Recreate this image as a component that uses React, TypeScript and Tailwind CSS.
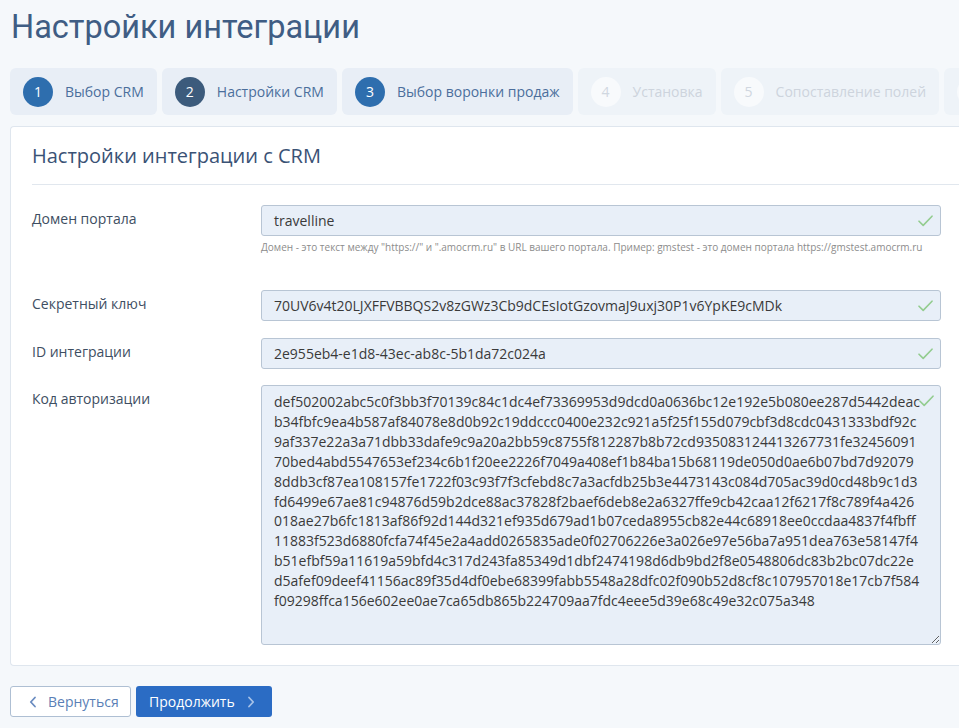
import React from "react";

const steps = [
  { n: 1, label: "Выбор CRM", state: "done" },
  { n: 2, label: "Настройки CRM", state: "current" },
  { n: 3, label: "Выбор воронки продаж", state: "done" },
  { n: 4, label: "Установка", state: "off" },
  { n: 5, label: "Сопоставление полей", state: "off" },
  { n: 6, label: "Завершение", state: "off" },
];

const codeLines = [
  "def502002abc5c0f3bb3f70139c84c1dc4ef73369953d9dcd0a0636bc12e192e5b080ee287d5442deac",
  "b34fbfc9ea4b587af84078e8d0b92c19ddccc0400e232c921a5f25f155d079cbf3d8cdc0431333bdf92c",
  "9af337e22a3a71dbb33dafe9c9a20a2bb59c8755f812287b8b72cd935083124413267731fe32456091",
  "70bed4abd5547653ef234c6b1f20ee2226f7049a408ef1b84ba15b68119de050d0ae6b07bd7d92079",
  "8ddb3cf87ea108157fe1722f03c93f7f3cfebd8c7a3acfdb25b3e4473143c084d705ac39d0cd48b9c1d3",
  "fd6499e67ae81c94876d59b2dce88ac37828f2baef6deb8e2a6327ffe9cb42caa12f6217f8c789f4a426",
  "018ae27b6fc1813af86f92d144d321ef935d679ad1b07ceda8955cb82e44c68918ee0ccdaa4837f4fbff",
  "11883f523d6880fcfa74f45e2a4add0265835ade0f02706226e3a026e97e56ba7a951dea763e58147f4",
  "b51efbf59a11619a59bfd4c317d243fa85349d1dbf2474198d6db9bd2f8e0548806dc83b2bc07dc22e",
  "d5afef09deef41156ac89f35d4df0ebe68399fabb5548a28dfc02f090b52d8cf8c107957018e17cb7f584",
  "f09298ffca156e602ee0ae7ca65db865b224709aa7fdc4eee5d39e68c49e32c075a348",
];

function Check() {
  return (
    <svg width="15" height="12" viewBox="0 0 15 12" fill="none">
      <path d="M1 6.2 L5.2 10.4 L14 1.2" stroke="#93cc8f" strokeWidth="1.6" strokeLinecap="round" strokeLinejoin="round" />
    </svg>
  );
}

function Field({ value }: { value: string }) {
  return (
    <div className="relative h-[31px] rounded-[3px] border border-[#b8c5d4] bg-[#e8eff8] flex items-center pl-[12px] pr-[30px]">
      <span className="text-[14px] text-[#3a3a3a] whitespace-nowrap">{value}</span>
      <span className="absolute right-[7px] top-1/2 -translate-y-1/2 flex">
        <Check />
      </span>
    </div>
  );
}

export default function App() {
  return (
    <div
      className="min-h-[728px] w-[959px] overflow-hidden bg-[#f5f8fb] pl-[10px]"
      style={{ fontFamily: '"Open Sans", "Noto Sans", sans-serif' }}
    >
      <h1
        className="pl-[1px] pt-[6px] text-[32.5px] leading-[42px] text-[#3f5d84] font-normal"
        style={{ fontFamily: 'Roboto, "Liberation Sans", sans-serif' }}
      >
        Настройки интеграции
      </h1>

      <div className="mt-[20px] flex gap-[5px] overflow-hidden">
        {steps.map((s) => {
          const off = s.state === "off";
          return (
            <div
              key={s.n}
              className={
                "flex shrink-0 items-center gap-[12px] rounded-[6px] pl-[13px] pr-[13px] h-[47px] " +
                (off ? "bg-[#eef3f8]" : "bg-[#e8eef6]")
              }
            >
              <div
                className={
                  "flex h-[30px] w-[30px] items-center justify-center rounded-full text-[14px] " +
                  (s.state === "current"
                    ? "bg-[#3c5b7c] text-white"
                    : s.state === "done"
                    ? "bg-[#2e6eae] text-white"
                    : "bg-[#f8fafc] text-[#d0d7e0]")
                }
              >
                {s.n}
              </div>
              <span className={"text-[14px] whitespace-nowrap " + (off ? "text-[#cdd4dd]" : "text-[#4b6e9c]")}>
                {s.label}
              </span>
            </div>
          );
        })}
      </div>

      <div className="mt-[11px] rounded-tl-[4px] rounded-bl-[4px] border border-r-0 border-[#dfe6ee] bg-white pl-[21px] pb-[20px]">
        <div className="border-b border-[#e1e7ee] pt-[15px] pb-[14px]">
          <h2 className="text-[20px] leading-[28px] text-[#3a5275] font-normal">Настройки интеграции с CRM</h2>
        </div>

        <div className="pt-[20px] pr-[18px]">
          <div className="flex">
            <div className="w-[229px] shrink-0 pt-[3px] text-[14px] text-[#3e4e62]">Домен портала</div>
            <div className="flex-1">
              <Field value="travelline" />
              <div className="mt-[4px] text-[10px] leading-[14px] text-[#8c8c8c] whitespace-nowrap">
                Домен - это текст между "https://" и ".amocrm.ru" в URL вашего портала. Пример: gmstest - это домен портала https://gmstest.amocrm.ru
              </div>
            </div>
          </div>

          <div className="mt-[36px] flex">
            <div className="w-[229px] shrink-0 pt-[3px] text-[14px] text-[#3e4e62]">Секретный ключ</div>
            <div className="flex-1">
              <Field value="70UV6v4t20LJXFFVBBQS2v8zGWz3Cb9dCEsIotGzovmaJ9uxj30P1v6YpKE9cMDk" />
            </div>
          </div>

          <div className="mt-[17px] flex">
            <div className="w-[229px] shrink-0 pt-[3px] text-[14px] text-[#3e4e62]">ID интеграции</div>
            <div className="flex-1">
              <Field value="2e955eb4-e1d8-43ec-ab8c-5b1da72c024a" />
            </div>
          </div>

          <div className="mt-[16px] flex">
            <div className="w-[229px] shrink-0 pt-[3px] text-[14px] text-[#3e4e62]">Код авторизации</div>
            <div className="relative flex-1">
              <textarea
                readOnly
                wrap="off"
                value={codeLines.join("\n")}
                className="block h-[260px] w-full overflow-hidden rounded-[3px] border border-[#b8c5d4] bg-[#e8eff8] pl-[12px] pr-[8px] pt-[6px] text-[14px] text-[#3a3a3a] outline-none resize"
                style={{ fontFamily: '"Open Sans", "Noto Sans", sans-serif', lineHeight: "19.9px" }}
              />
              <span className="absolute right-[7px] top-[10px] flex">
                <Check />
              </span>
            </div>
          </div>
        </div>
      </div>

      <div className="mt-[20px] flex gap-[5px]">
        <button className="flex h-[31px] w-[121px] items-center rounded-[3px] border border-[#aebfd3] bg-white pl-[18px] text-[14px] text-[#5a7fb6]">
          <svg width="8" height="12" viewBox="0 0 8 12" fill="none" className="mr-[11px]">
            <path d="M6 1.5 L1.8 6 L6 10.5" stroke="#6a8cc0" strokeWidth="1.8" strokeLinecap="round" strokeLinejoin="round" />
          </svg>
          Вернуться
        </button>
        <button className="flex h-[31px] w-[136px] items-center rounded-[3px] bg-[#2b6cc4] pl-[13px] text-[14px] text-white">
          Продолжить
          <svg width="8" height="12" viewBox="0 0 8 12" fill="none" className="ml-[12px]">
            <path d="M2 1.5 L6.2 6 L2 10.5" stroke="#a7c2e8" strokeWidth="1.8" strokeLinecap="round" strokeLinejoin="round" />
          </svg>
        </button>
      </div>
    </div>
  );
}
